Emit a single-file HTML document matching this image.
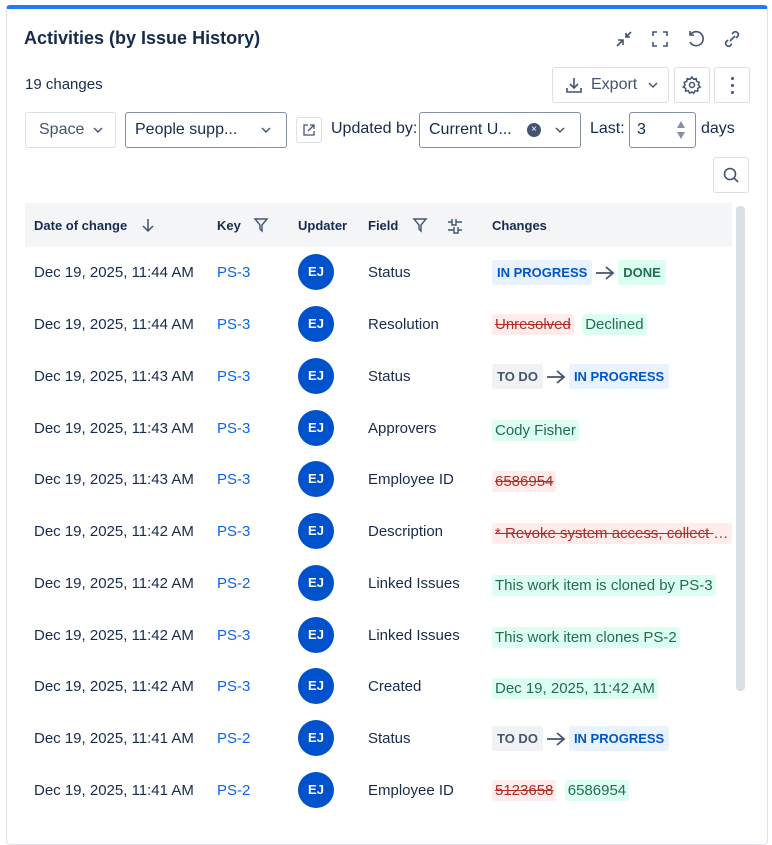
<!DOCTYPE html>
<html><head><meta charset="utf-8"><style>
*{box-sizing:border-box;margin:0;padding:0}
body{width:772px;height:814px;overflow:hidden;background:#fff;font-family:"Liberation Sans",Arial,sans-serif;color:#172b4d;position:relative}
.card{position:absolute;left:6px;top:5px;width:762px;height:840px;border:1px solid #dfe1e6;border-top:4px solid #1d7afc;border-radius:4px}
.abs{position:absolute}
.title{left:24px;top:28px;font-size:18px;font-weight:bold;color:#172b4d}
.box{position:absolute;border:1px solid #c1c7d0;border-radius:3px;background:#fff;font-size:15px;display:flex;align-items:center}
.btn{border-color:#dcdfe4}
.hdr{position:absolute;left:25px;top:203px;width:707px;height:44px;background:#f4f5f7;font-size:13px;font-weight:bold}
.hdr span{position:absolute;top:15px}
.row{position:absolute;left:25px;width:707px;height:52px;font-size:15px}
.row>span{position:absolute;top:18px}
.av{position:absolute;left:273px;top:8px;width:36px;height:36px;border-radius:50%;background:#0052cc;color:#fff;font-size:13px;font-weight:bold;text-align:center;line-height:36px}
.k{color:#0c66e4}
.lz{display:inline-block;padding:0 5px;height:25px;line-height:25px;border-radius:3px;font-size:13px;font-weight:bold;vertical-align:middle}
.ip{background:#e9f2ff;color:#0055cc}
.dn{background:#dcfff1;color:#216e4e}
.td{background:#f1f2f4;color:#44546f}
.del{background:#ffeceb;color:#ae2e24;text-decoration:line-through;padding:2px 3px;border-radius:3px}
.add{background:#dcfff1;color:#216e4e;padding:2px 3px;border-radius:3px}
.arr{display:inline-block;vertical-align:middle;margin:0 3px}
svg{display:block}
.lzw{top:14px!important;display:flex;align-items:center}
</style></head><body>
<div class="card"></div>
<div class="abs title">Activities (by Issue History)</div>
<svg class="abs" style="left:614px;top:29px" width="20" height="20" viewBox="0 0 20 20" fill="none" stroke="#44546f" stroke-width="1.6"><path d="M3 17l6-6M4 11h5v5M17 3l-5 5M12 4v4h4"/></svg>
<svg class="abs" style="left:650px;top:29px" width="20" height="20" viewBox="0 0 20 20" fill="none" stroke="#44546f" stroke-width="1.6"><path d="M3 7V3h4M13 3h4v4M17 13v4h-4M7 17H3v-4"/></svg>
<svg class="abs" style="left:686px;top:29px" width="20" height="20" viewBox="0 0 20 20" fill="none" stroke="#44546f" stroke-width="1.6"><path d="M5 5a7 7 0 1 1-1 8M4 2v4h4"/></svg>
<svg class="abs" style="left:722px;top:29px" width="20" height="20" viewBox="0 0 20 20" fill="none" stroke="#44546f" stroke-width="1.6"><path d="M8 12l5-5M10 5l2-2a3 3 0 0 1 4 4l-2 2M10 15l-2 2a3 3 0 0 1-4-4l2-2"/></svg>
<div class="abs" style="left:25px;top:76px;font-size:15px">19 changes</div>
<div class="box btn" style="left:552px;top:67px;width:117px;height:36px;padding-left:12px;color:#44546f">
<svg width="18" height="18" viewBox="0 0 18 18" fill="none" stroke="#44546f" stroke-width="1.6"><path d="M9 2v9M5 8l4 4 4-4M2 12v4h14v-4"/></svg>
<span style="margin-left:8px;font-size:16px">Export</span><svg style="margin-left:10px" width="12" height="12" viewBox="0 0 12 12" fill="none" stroke="#44546f" stroke-width="1.4"><path d="M2 4l4 4 4-4"/></svg></div>
<div class="box btn" style="left:674px;top:67px;width:36px;height:36px;justify-content:center">
<svg width="20" height="20" viewBox="0 0 20 20" fill="none" stroke="#44546f" stroke-width="1.5"><circle cx="10" cy="10" r="2.5"/><path d="M10 2l1.5 2.3 2.7-.7.4 2.7 2.6 1-.9 2.7 1.9 2-2.5 1.3.1 2.8-2.8-.3-1.3 2.4L10 16.9l-2.3 1.3L6.4 15.8l-2.8.3.1-2.8L1.2 12l1.9-2-.9-2.7 2.6-1 .4-2.7 2.7.7z"/></svg></div>
<div class="box btn" style="left:714px;top:67px;width:36px;height:36px;justify-content:center;flex-direction:column;gap:4px">
<i style="width:3px;height:3px;background:#44546f;border-radius:50%;display:block"></i><i style="width:3px;height:3px;background:#44546f;border-radius:50%;display:block"></i><i style="width:3px;height:3px;background:#44546f;border-radius:50%;display:block"></i></div>
<div class="box btn" style="left:25px;top:112px;width:91px;height:36px;padding-left:13px;color:#44546f;font-size:16px">Space<svg style="margin-left:8px" width="12" height="12" viewBox="0 0 12 12" fill="none" stroke="#44546f" stroke-width="1.4"><path d="M2 4l4 4 4-4"/></svg></div>
<div class="box" style="left:125px;top:112px;width:162px;height:36px;padding-left:9px;border-color:#8590a2;font-size:16px">People supp...<svg style="position:absolute;right:14px" width="12" height="12" viewBox="0 0 12 12" fill="none" stroke="#44546f" stroke-width="1.4"><path d="M2 4l4 4 4-4"/></svg></div>
<div class="box btn" style="left:296px;top:117px;width:26px;height:26px;justify-content:center">
<svg width="14" height="14" viewBox="0 0 14 14" fill="none" stroke="#44546f" stroke-width="1.3"><path d="M6 2H2v10h10V8M8 2h4v4M12 2L6 8"/></svg></div>
<div class="abs" style="left:331px;top:120px;font-size:16px">Updated by:</div>
<div class="box" style="left:419px;top:112px;width:162px;height:36px;padding-left:9px;border-color:#8590a2;font-size:16px">Current U...
<span style="position:absolute;left:107px;top:10px;width:14px;height:14px;border-radius:50%;background:#44546f;color:#fff;font-size:10px;line-height:14px;text-align:center">×</span>
<svg style="position:absolute;right:14px" width="12" height="12" viewBox="0 0 12 12" fill="none" stroke="#44546f" stroke-width="1.4"><path d="M2 4l4 4 4-4"/></svg></div>
<div class="abs" style="left:590px;top:120px;font-size:16px">Last:</div>
<div class="box" style="left:629px;top:112px;width:67px;height:36px;padding-left:7px;border-color:#8590a2;font-size:16px">3
<svg style="position:absolute;right:9px;top:6px" width="10" height="22" viewBox="0 0 10 22" fill="#8590a2"><path d="M1 9L5 2l4 7zM1 13l4 7 4-7z"/></svg></div>
<div class="abs" style="left:701px;top:120px;font-size:16px">days</div>
<div class="box btn" style="left:713px;top:157px;width:36px;height:36px;justify-content:center">
<svg width="18" height="18" viewBox="0 0 18 18" fill="none" stroke="#44546f" stroke-width="1.6"><circle cx="8" cy="8" r="5.5"/><path d="M12 12l4 4"/></svg></div>
<div class="abs" style="left:736px;top:206px;width:9px;height:485px;background:#dcdfe4;border-radius:4px"></div>
<div class="hdr">
<span style="left:9px">Date of change</span>
<svg class="abs" style="left:115px;top:14px" width="16" height="16" viewBox="0 0 16 16" fill="none" stroke="#44546f" stroke-width="1.5"><path d="M8 2v12M3 9l5 5 5-5"/></svg>
<span style="left:192px">Key</span>
<svg class="abs" style="left:228px;top:14px" width="16" height="16" viewBox="0 0 16 16" fill="none" stroke="#44546f" stroke-width="1.4"><path d="M2 2h12L9 8v6L7 12V8z"/></svg>
<span style="left:273px">Updater</span>
<span style="left:343px">Field</span>
<svg class="abs" style="left:387px;top:14px" width="16" height="16" viewBox="0 0 16 16" fill="none" stroke="#44546f" stroke-width="1.4"><path d="M2 2h12L9 8v6L7 12V8z"/></svg>
<svg class="abs" style="left:421px;top:14px" width="18" height="18" viewBox="0 0 18 18" fill="none" stroke="#44546f" stroke-width="1.4"><path d="M2 5h4M10 5h6M6 2v6h4V2M2 13h6M12 13h4M8 10v6h4v-6"/></svg>
<span style="left:467px">Changes</span>
</div>
<div class="row" style="top:246px"><span style="left:9px">Dec 19, 2025, 11:44 AM</span><span class="k" style="left:192px">PS-3</span><div class="av">EJ</div><span style="left:343px">Status</span><span class="lzw" style="left:467px"><b class="lz ip">IN PROGRESS</b><svg class="arr" width="20" height="16" viewBox="0 0 20 16" fill="none" stroke="#44546f" stroke-width="1.8"><path d="M1 8h17M11 2l7 6-7 6"/></svg><b class="lz dn">DONE</b></span></div>
<div class="row" style="top:298px"><span style="left:9px">Dec 19, 2025, 11:44 AM</span><span class="k" style="left:192px">PS-3</span><div class="av">EJ</div><span style="left:343px">Resolution</span><span style="left:467px"><span class="del">Unresolved</span> &nbsp;<span class="add">Declined</span></span></div>
<div class="row" style="top:350px"><span style="left:9px">Dec 19, 2025, 11:43 AM</span><span class="k" style="left:192px">PS-3</span><div class="av">EJ</div><span style="left:343px">Status</span><span class="lzw" style="left:467px"><b class="lz td">TO DO</b><svg class="arr" width="20" height="16" viewBox="0 0 20 16" fill="none" stroke="#44546f" stroke-width="1.8"><path d="M1 8h17M11 2l7 6-7 6"/></svg><b class="lz ip">IN PROGRESS</b></span></div>
<div class="row" style="top:402px"><span style="left:9px">Dec 19, 2025, 11:43 AM</span><span class="k" style="left:192px">PS-3</span><div class="av">EJ</div><span style="left:343px">Approvers</span><span class="add" style="left:467px">Cody Fisher</span></div>
<div class="row" style="top:453px"><span style="left:9px">Dec 19, 2025, 11:43 AM</span><span class="k" style="left:192px">PS-3</span><div class="av">EJ</div><span style="left:343px">Employee ID</span><span class="del" style="left:467px">6586954</span></div>
<div class="row" style="top:505px"><span style="left:9px">Dec 19, 2025, 11:42 AM</span><span class="k" style="left:192px">PS-3</span><div class="av">EJ</div><span style="left:343px">Description</span><span class="del" style="left:467px;width:240px;white-space:nowrap;overflow:hidden;text-overflow:ellipsis">* Revoke system access, collect equipment</span></div>
<div class="row" style="top:557px"><span style="left:9px">Dec 19, 2025, 11:42 AM</span><span class="k" style="left:192px">PS-2</span><div class="av">EJ</div><span style="left:343px">Linked Issues</span><span class="add" style="left:467px">This work item is cloned by PS-3</span></div>
<div class="row" style="top:609px"><span style="left:9px">Dec 19, 2025, 11:42 AM</span><span class="k" style="left:192px">PS-3</span><div class="av">EJ</div><span style="left:343px">Linked Issues</span><span class="add" style="left:467px">This work item clones PS-2</span></div>
<div class="row" style="top:660px"><span style="left:9px">Dec 19, 2025, 11:42 AM</span><span class="k" style="left:192px">PS-3</span><div class="av">EJ</div><span style="left:343px">Created</span><span class="add" style="left:467px">Dec 19, 2025, 11:42 AM</span></div>
<div class="row" style="top:712px"><span style="left:9px">Dec 19, 2025, 11:41 AM</span><span class="k" style="left:192px">PS-2</span><div class="av">EJ</div><span style="left:343px">Status</span><span class="lzw" style="left:467px"><b class="lz td">TO DO</b><svg class="arr" width="20" height="16" viewBox="0 0 20 16" fill="none" stroke="#44546f" stroke-width="1.8"><path d="M1 8h17M11 2l7 6-7 6"/></svg><b class="lz ip">IN PROGRESS</b></span></div>
<div class="row" style="top:764px"><span style="left:9px">Dec 19, 2025, 11:41 AM</span><span class="k" style="left:192px">PS-2</span><div class="av">EJ</div><span style="left:343px">Employee ID</span><span style="left:467px"><span class="del">5123658</span> &nbsp;<span class="add">6586954</span></span></div>
</body></html>
